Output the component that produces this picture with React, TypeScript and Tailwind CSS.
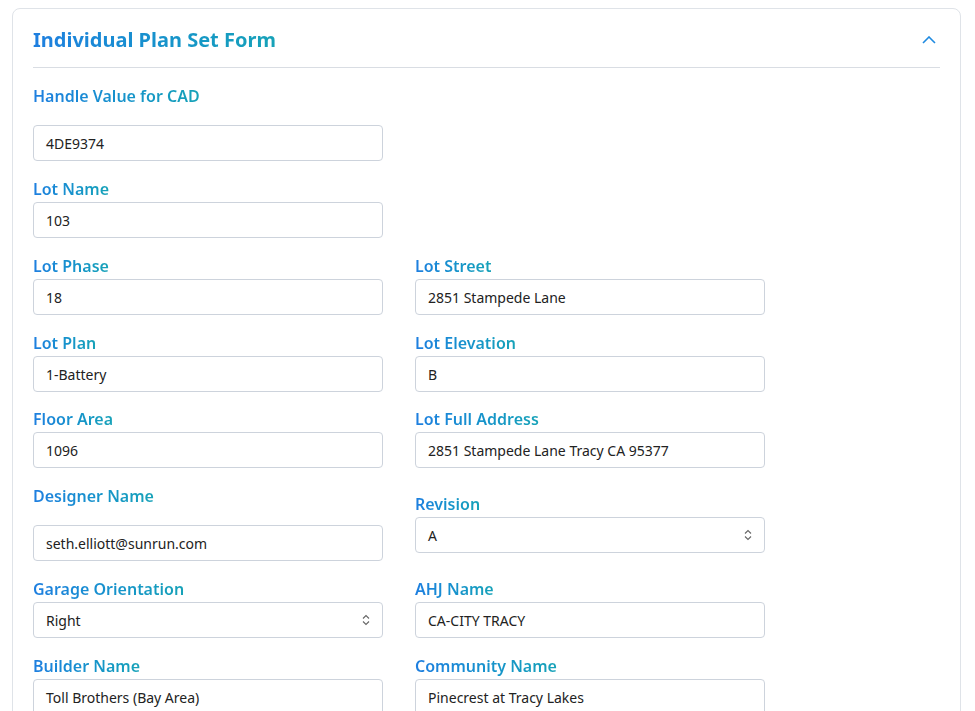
import React from "react";

const lab = "block text-[16px] leading-5 font-semibold bg-gradient-to-r from-[#1f7fe0] to-[#17a2b8] bg-clip-text text-transparent w-fit";
const inp = "w-[350px] h-9 border border-[#cdd3dc] rounded-[4px] px-3 flex items-center text-[14px] text-[#222]";

function F({ label, value, sel, lmb = "mb-[3px]", mt = "" }: { label: string; value: string; sel?: boolean; lmb?: string; mt?: string }) {
  return (
    <div className={mt}>
      <span className={`${lab} ${lmb}`}>{label}</span>
      <div className={`${inp} justify-between`}>
        <span>{value}</span>
        {sel && (
          <svg width="8" height="12" viewBox="0 0 8 12" fill="none" stroke="#666" strokeWidth="1.1">
            <path d="M1 4.5 L4 1.5 L7 4.5" />
            <path d="M1 7.5 L4 10.5 L7 7.5" />
          </svg>
        )}
      </div>
    </div>
  );
}

export default function App() {
  return (
    <div className="bg-white min-h-[711px] pt-2 pl-3 font-['Inter',sans-serif]">
      <div className="w-[949px] h-[720px] border border-[#dfe3e8] rounded-lg pl-5 pr-5 pt-[17px]">
        <div className="flex items-center justify-between pb-[13px] border-b border-[#d9dde3]">
          <h1 className="text-[20px] leading-7 font-bold bg-gradient-to-r from-[#1f7fe0] to-[#17a2b8] bg-clip-text text-transparent">Individual Plan Set Form</h1>
          <svg width="14" height="8" viewBox="0 0 14 8" fill="none" stroke="#1f8ae0" strokeWidth="1.6" className="mr-1">
            <path d="M1 7 L7 1 L13 7" />
          </svg>
        </div>
        <div className="pt-[18px] flex flex-col gap-[18px]">
          <F label="Handle Value for CAD" value="4DE9374" lmb="mb-[19px]" />
          <F label="Lot Name" value="103" />
          <div className="flex gap-8">
            <F label="Lot Phase" value="18" />
            <F label="Lot Street" value="2851 Stampede Lane" />
          </div>
          <div className="flex gap-8">
            <F label="Lot Plan" value="1-Battery" />
            <F label="Lot Elevation" value="B" />
          </div>
          <div className="flex gap-8 -mt-[1px]">
            <F label="Floor Area" value="1096" />
            <F label="Lot Full Address" value="2851 Stampede Lane Tracy CA  95377" />
          </div>
          <div className="flex gap-8 items-start">
            <F label="Designer Name" value="seth.elliott@sunrun.com" lmb="mb-[19px]" />
            <F label="Revision" value="A" sel mt="mt-2" />
          </div>
          <div className="flex gap-8">
            <F label="Garage Orientation" value="Right" sel />
            <F label="AHJ Name" value="CA-CITY TRACY" />
          </div>
          <div className="flex gap-8">
            <F label="Builder Name" value="Toll Brothers (Bay Area)" />
            <F label="Community Name" value="Pinecrest at Tracy Lakes" />
          </div>
        </div>
      </div>
    </div>
  );
}
